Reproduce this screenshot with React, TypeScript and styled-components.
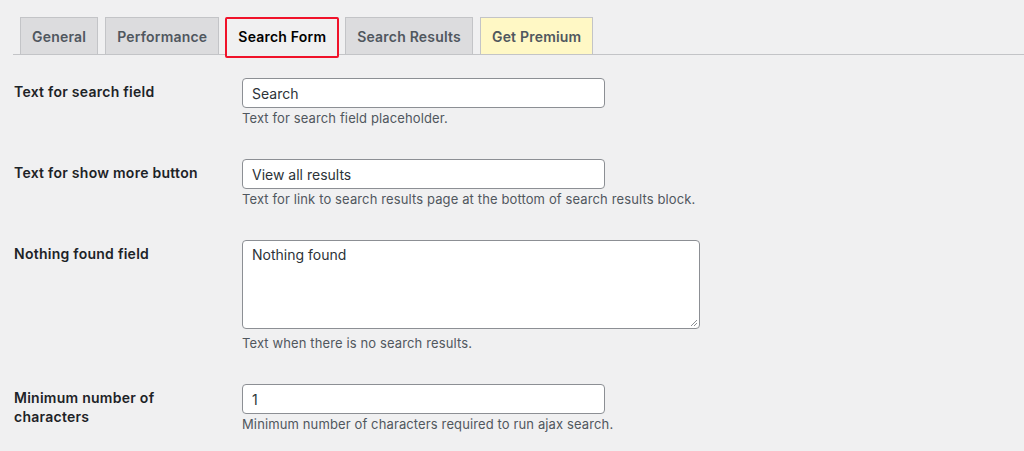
import React from "react";
import styled, { createGlobalStyle } from "styled-components";

const Global = createGlobalStyle`
  html, body { margin: 0; padding: 0; background: #f0f0f1; }
  body {
    font-family: Inter, "Noto Sans", "Liberation Sans", sans-serif;
    color: #1d2327;
    -webkit-font-smoothing: antialiased;
  }
  * { box-sizing: border-box; }
`;

const Page = styled.div`
  width: 1024px;
  height: 451px;
  overflow: hidden;
  background: #f0f0f1;
  padding: 17px 0 0 13px;
`;

const TabBar = styled.nav`
  display: flex;
  align-items: flex-end;
  gap: 7px;
  padding-left: 7px;
  border-bottom: 1px solid #c3c4c7;
  height: 38px;
`;

const Tab = styled.div<{ $active?: boolean; $premium?: boolean }>`
  position: relative;
  height: 38px;
  margin-bottom: -1px;
  padding: 0 11px;
  display: flex;
  align-items: center;
  font-size: 14px;
  font-weight: 600;
  letter-spacing: 0.2px;
  border: 1px solid #c3c4c7;
  border-bottom-color: ${(p) => (p.$active ? "#f0f0f1" : "#c3c4c7")};
  background: ${(p) => (p.$active ? "#f0f0f1" : p.$premium ? "#fff8c5" : "#dcdcde")};
  color: ${(p) => (p.$active ? "#000" : "#50575e")};
  white-space: nowrap;
`;

const Highlight = styled.span`
  position: absolute;
  left: -2px;
  right: -2px;
  top: -1px;
  bottom: -4px;
  border: 2px solid #f0122a;
  border-radius: 2px;
  pointer-events: none;
`;

const Form = styled.div`
  display: flex;
  flex-direction: column;
  gap: 32px;
  padding-top: 23px;
`;

const Row = styled.div`
  display: grid;
  grid-template-columns: 229px 1fr;
`;

const Label = styled.div`
  padding: 4px 0 0 1px;
  font-size: 14px;
  font-weight: 600;
  line-height: 19px;
  color: #1d2327;
  letter-spacing: 0.26px;
`;

const Field = styled.div`
  display: flex;
  flex-direction: column;
  align-items: flex-start;
`;

const Input = styled.div`
  width: 363px;
  height: 30px;
  background: #fff;
  border: 1px solid #8c8f94;
  border-radius: 4px;
  padding: 0 9px;
  display: flex;
  align-items: center;
  font-size: 14px;
  color: #2c3338;
`;

const TextArea = styled.div`
  position: relative;
  width: 458px;
  height: 89px;
  background: #fff;
  border: 1px solid #8c8f94;
  border-radius: 4px;
  padding: 4px 9px;
  font-size: 14px;
  line-height: 20px;
  color: #2c3338;
`;

const Grip = styled.svg`
  position: absolute;
  right: 1px;
  bottom: 1px;
`;

const Desc = styled.p<{ $gap?: number }>`
  margin: ${(p) => p.$gap ?? 1}px 0 0;
  font-size: 13px;
  line-height: 18px;
  letter-spacing: 0.12px;
  color: #50575e;
`;

const tabs = [
  { label: "General" },
  { label: "Performance" },
  { label: "Search Form", active: true },
  { label: "Search Results" },
  { label: "Get Premium", premium: true },
];

export default function App() {
  return (
    <>
      <Global />
      <Page>
        <TabBar>
          {tabs.map((t) => (
            <Tab key={t.label} $active={t.active} $premium={t.premium}>
              {t.label}
              {t.active && <Highlight />}
            </Tab>
          ))}
        </TabBar>
        <Form>
          <Row>
            <Label>Text for search field</Label>
            <Field>
              <Input>Search</Input>
              <Desc>Text for search field placeholder.</Desc>
            </Field>
          </Row>
          <Row>
            <Label>Text for show more button</Label>
            <Field>
              <Input>View all results</Input>
              <Desc>Text for link to search results page at the bottom of search results block.</Desc>
            </Field>
          </Row>
          <Row>
            <Label>Nothing found field</Label>
            <Field>
              <TextArea>
                Nothing found
                <Grip width="9" height="9" viewBox="0 0 9 9">
                  <path d="M8 2 L2 8 M8 5 L5 8" stroke="#8c8f94" strokeWidth="1" fill="none" />
                </Grip>
              </TextArea>
              <Desc $gap={5}>Text when there is no search results.</Desc>
            </Field>
          </Row>
          <Row>
            <Label>
              Minimum number of
              <br />
              characters
            </Label>
            <Field>
              <Input>1</Input>
              <Desc>Minimum number of characters required to run ajax search.</Desc>
            </Field>
          </Row>
        </Form>
      </Page>
    </>
  );
}
